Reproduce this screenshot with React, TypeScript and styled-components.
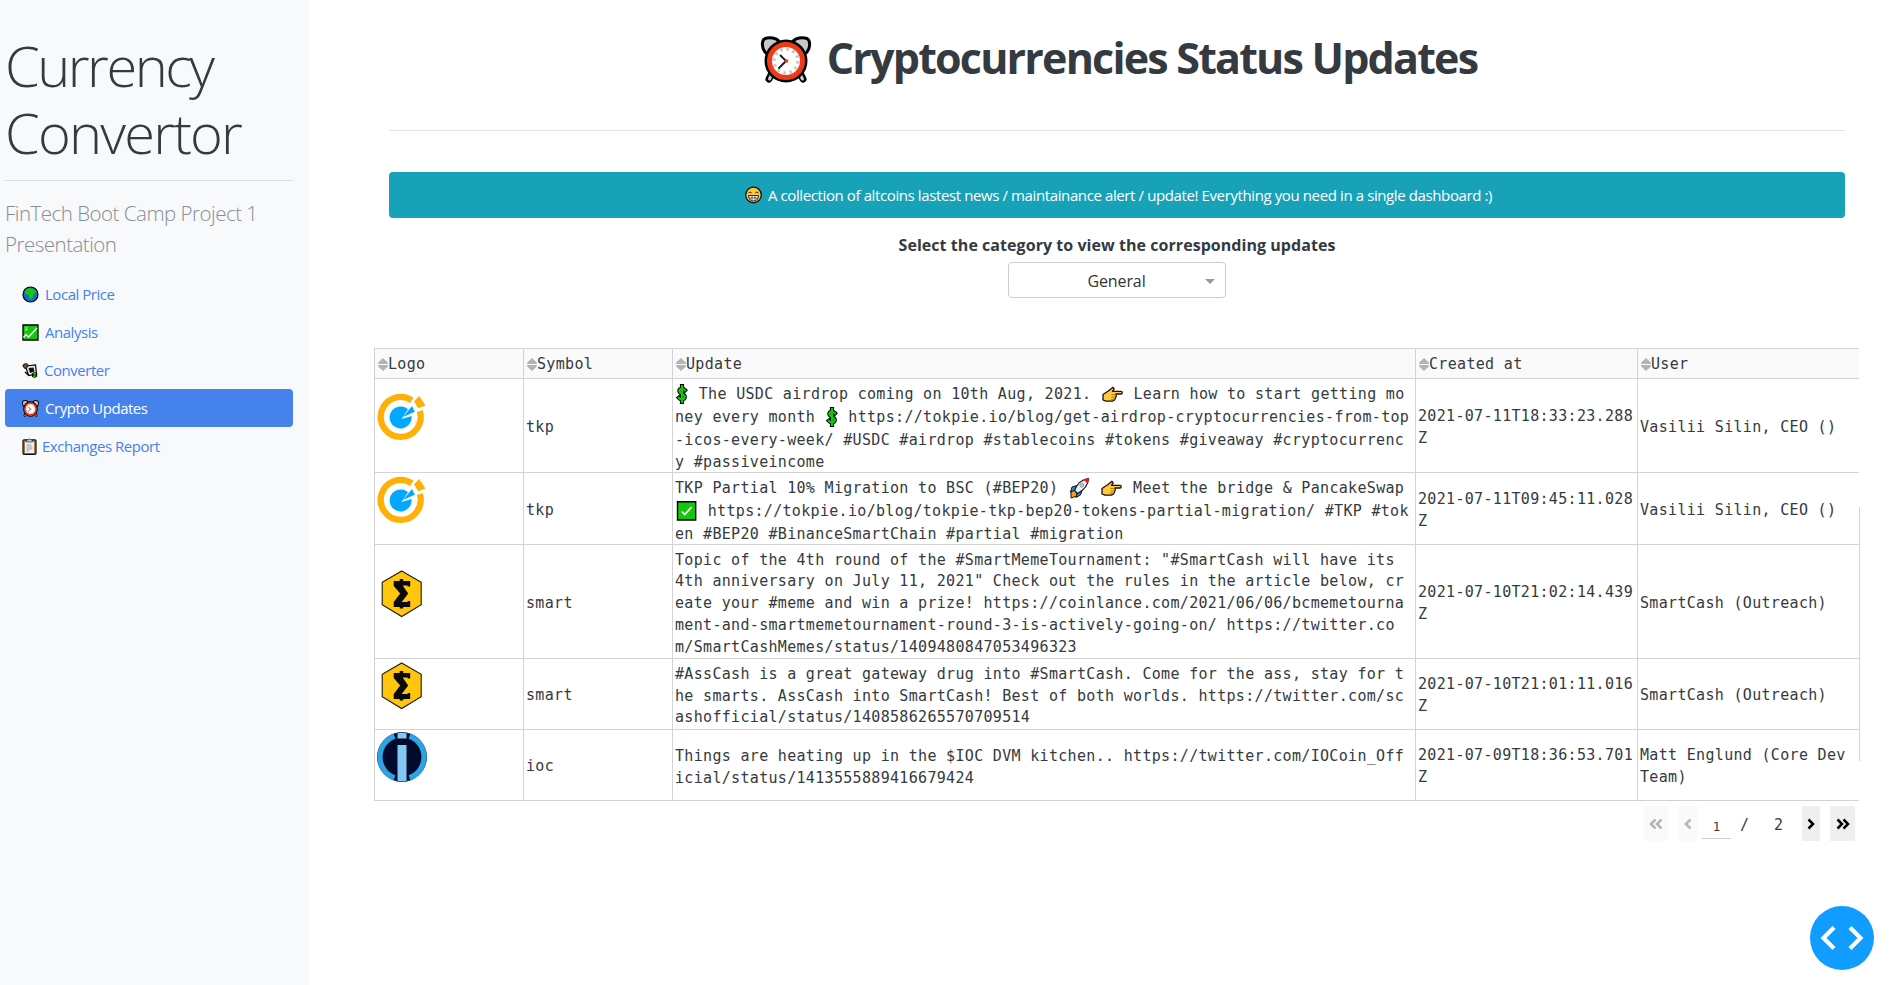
import React from 'react';
import styled, { createGlobalStyle, css } from 'styled-components';

const sans = `'Open Sans', 'Noto Sans', sans-serif`;
const mono = `'DejaVu Sans Mono', 'Liberation Mono', monospace`;
const line = '#d3d3d3';

const GlobalStyle = createGlobalStyle`
  *, *::before, *::after { box-sizing: border-box; }
  body {
    margin: 0;
    background: #fff;
    color: #343a40;
    font-family: ${sans};
    overflow: hidden;
  }
`;

/* ---------- page shell ---------- */

const Page = styled.div`
  display: flex;
  height: 985px;
`;

const Sidebar = styled.aside`
  flex: none;
  width: 309px;
  padding: 32px 16px 0 5px;
  background: #f8f9fb;
`;

const Brand = styled.h1`
  margin: 0;
  padding-bottom: 14px;
  border-bottom: 1px solid #dddfe2;
  font-size: 56px;
  line-height: 67px;
  font-weight: 300;
`;

const BrandLine = styled.span<{ $tracking: number }>`
  display: block;
  letter-spacing: ${(p) => p.$tracking}px;
`;

const Lead = styled.p`
  margin: 17px 0 15px;
  font-size: 20.5px;
  line-height: 31px;
  font-weight: 300;
  letter-spacing: -0.5px;
  color: #868e96;
  white-space: nowrap;
`;

const Nav = styled.nav`
  display: flex;
  flex-direction: column;
`;

const NavItem = styled.a<{ $active?: boolean; $gap?: number }>`
  display: flex;
  align-items: center;
  gap: ${(p) => p.$gap ?? 5}px;
  height: 38px;
  padding: 0 17px;
  border-radius: 4px;
  font-size: 15px;
  letter-spacing: -0.47px;
  color: #4582ec;
  ${(p) =>
    p.$active &&
    css`
      background: #4582ec;
      color: #fff;
    `}
`;

const Main = styled.main`
  flex: 1;
  min-width: 0;
  padding: 0 32px 0 65px;
`;

const Intro = styled.section`
  display: flex;
  flex-direction: column;
  align-items: center;
  margin: 0 14px 0 15px;
`;

const Title = styled.h2`
  display: flex;
  align-items: center;
  justify-content: center;
  gap: 16px;
  width: 100%;
  height: 131px;
  margin: 0;
  padding: 0 0 15px 4px;
  border-bottom: 1px solid #e2e3e4;
  font-size: 43px;
  font-weight: 700;
  letter-spacing: -1.8px;
  white-space: nowrap;
`;

const TitleIcon = styled.span`
  padding-top: 3px;
`;

const Notice = styled.div`
  display: flex;
  align-items: center;
  justify-content: center;
  gap: 6px;
  width: 100%;
  height: 46px;
  margin-top: 41px;
  padding-left: 3px;
  border-radius: 4px;
  background: #17a2b8;
  color: #fff;
  font-size: 15px;
  letter-spacing: -0.39px;
`;

const FieldLabel = styled.label`
  margin-top: 14px;
  font-size: 16px;
  line-height: 26px;
  font-weight: 700;
  letter-spacing: 0.05px;
`;

const Select = styled.div`
  display: flex;
  align-items: center;
  width: 218px;
  height: 36px;
  margin: 4px 0 50px;
  border: 1px solid #ccc;
  border-radius: 4px;
  font-size: 16px;
  letter-spacing: -0.1px;
  color: #333;
`;

const SelectValue = styled.span`
  flex: 1;
  padding: 1px 0 0 25px;
  text-align: center;
`;

const Caret = styled.span`
  margin: 2px 10px 0 6px;
  border: 5px solid transparent;
  border-bottom-width: 0;
  border-top-color: #999;
`;

/* ---------- table ---------- */

const Table = styled.div`
  position: relative;
  border-top: 1px solid ${line};
  font-family: ${mono};
  font-size: 15px;
  letter-spacing: 0.317px;
  line-height: 21.8px;
  white-space: pre;
`;

const ScrollEdge = styled.div`
  position: absolute;
  top: 158px;
  right: -1px;
  width: 1px;
  height: 254px;
  background: ${line};
`;

const Row = styled.div<{ $height: number; $head?: boolean }>`
  display: grid;
  grid-template-columns: 149px 149px 743px 222px 222px;
  grid-template-rows: 100%;
  height: ${(p) => p.$height}px;
  border-bottom: 1px solid ${line};
  background: ${(p) => (p.$head ? '#fafafa' : '#fff')};
`;

const Cell = styled.div<{ $drop?: number }>`
  display: flex;
  flex-direction: column;
  justify-content: center;
  padding: ${(p) => p.$drop ?? 4}px 0 0 2px;
  border-left: 1px solid ${line};
`;

const LogoCell = styled(Cell)`
  padding: 0 0 16px 2px;
`;

const HeadCell = styled(Cell)`
  flex-direction: row;
  justify-content: flex-start;
  align-items: center;
  padding: 2px 0 0 3px;
`;

const TextLine = styled.div<{ $tall?: boolean }>`
  flex: none;
  height: ${(p) => (p.$tall ? 22.8 : 21.8)}px;
`;

const Glyph = styled.svg`
  flex: none;
  display: block;
  overflow: visible;
`;

const InlineGlyph = styled.svg`
  display: inline-block;
  vertical-align: -5px;
  overflow: visible;
`;

const Pager = styled.div`
  display: flex;
  align-items: center;
  justify-content: flex-end;
  margin-top: 5px;
  padding-right: 4px;
  height: 35px;
  font-family: ${mono};
  font-size: 15px;
`;

const PageButton = styled.button<{ $width: number; $gap: number }>`
  display: flex;
  align-items: center;
  justify-content: center;
  width: ${(p) => p.$width}px;
  height: 35px;
  margin: 0 ${(p) => p.$gap}px 0 0;
  padding: 0;
  border: 0;
  background: #efefef;
  color: #000;
  &:disabled {
    background: #fafafa;
    color: #b5b5b5;
  }
`;

const PageCurrent = styled.span`
  width: 29px;
  height: 25px;
  margin-top: 6px;
  border-bottom: 1px solid #ccc;
  font-size: 12.5px;
  line-height: 25px;
  text-align: center;
`;

const PageTotal = styled.span`
  display: flex;
  justify-content: space-between;
  width: 43px;
  margin: 3px 19px 0 9px;
`;

const DevToggle = styled.button`
  position: fixed;
  right: 17px;
  bottom: 15px;
  display: flex;
  align-items: center;
  justify-content: center;
  width: 64px;
  height: 64px;
  padding: 0;
  border: 0;
  border-radius: 50%;
  background: #119dff;
`;

/* ---------- pictograms ---------- */

const AlarmClock = ({ size, height }: { size: number; height?: number }) => (
  <Glyph width={size} height={height ?? size} viewBox="0 0 50 47" preserveAspectRatio="none">
    <path d="M12 35 8 43M38 35l4 8" stroke="#000" strokeWidth="7" strokeLinecap="round" />
    <path d="M11 38 8.500 43M39 38l2.500 5" stroke="#ccc" strokeWidth="3" strokeLinecap="round" />
    <path d="M4 16C0 11 1 4 4 2.500 9 1 15 2 18 5L7 19ZM46 16c4-5 3-12 0-13.500C41 1 35 2 32 5l11 14Z" fill="#c8c8c8" stroke="#000" strokeWidth="3" strokeLinejoin="round" />
    <circle cx="25" cy="25" r="21.500" fill="#000" />
    <circle cx="25" cy="25" r="16.500" fill="#fff" stroke="#f03a17" strokeWidth="5" />
    <circle cx="25" cy="25" r="12" fill="none" stroke="#c8c8c8" strokeWidth="3.500" strokeDasharray="2.600 3.683" />
    <path d="m19.500 19.500 5.500 5.500-7 7" fill="none" stroke="#222" strokeWidth="2" strokeLinecap="round" />
    <circle cx="25.500" cy="25" r="1.800" fill="#f03a17" />
  </Glyph>
);

const Globe = () => (
  <Glyph width="17" height="17" viewBox="0 0 17 17">
    <circle cx="8.500" cy="8.500" r="7.500" fill="#0b70d0" stroke="#000" strokeWidth="1.200" />
    <path d="M4 3.500 7.500 2l4 1 2.500 2-1 2.500-1.500.5-.5 3-2 2.500-1.500-1L7 9 4 8.500 3 6Z" fill="#16c60c" />
  </Glyph>
);

const ChartUp = () => (
  <Glyph width="17" height="17" viewBox="0 0 17 17">
    <path d="M1 1h15v15H1z" fill="#16c60c" stroke="#000" strokeWidth="1.300" />
    <path d="m1.500 13.500 2.500-3 2.500 2.500L15 4" fill="none" stroke="#fff" strokeWidth="1.400" />
    <path d="m3 2.500 1.300 2 1.300-2M4.300 4.500V7M3 5.500h2.600" fill="none" stroke="#b6f3b2" strokeWidth=".7" />
  </Glyph>
);

const FlyingMoney = () => (
  <Glyph width="16" height="17" viewBox="0 0 16 17">
    <path d="m3.500 4 10-1 1 9-8 1.500Z" fill="#e8e8e8" stroke="#000" strokeWidth="1.200" />
    <path d="m6.500 6 5-.5 1 4-4.500 1.500Z" fill="#111" />
    <path d="M1 3c2-2 5-1.500 5.500.5L4 6.500C2 6.500 1 5 1 3Z" fill="#6b4b35" stroke="#000" strokeWidth=".9" />
    <path d="m3 10 4 3.500" stroke="#000" strokeWidth="1.500" />
    <circle cx="12.500" cy="13" r="2.800" fill="#0a0a0a" />
    <path d="M14 11.500c-2-1-3 .8-1.500 1.400 1.600.6.700 2.300-1.200 1.400" fill="none" stroke="#16c60c" strokeWidth="1.200" />
  </Glyph>
);

const Clipboard = () => (
  <Glyph width="15" height="17" viewBox="0 0 15 17">
    <rect x="1" y="1.800" width="13" height="14.500" rx="1" fill="#a8794f" stroke="#111" strokeWidth="1.200" />
    <path d="M3 4h9v11H3z" fill="#f2f2f2" />
    <path d="M4.500 4V2h1.700L7.500.6 8.800 2h1.700v2Z" fill="#ccc" stroke="#444" strokeWidth=".8" />
    <path d="M4.500 7h5M4.500 9h6M4.500 11h6M4.500 13H7" stroke="#9a9a9a" strokeWidth="1" />
  </Glyph>
);

const GrinFace = () => (
  <Glyph width="17" height="18" viewBox="0 0 17 18">
    <circle cx="8.500" cy="9" r="7.800" fill="#ffc83d" stroke="#111" strokeWidth="1.300" />
    <path d="M3.500 7q1.600-2 3.200 0M10.300 7q1.600-2 3.200 0" fill="none" stroke="#222" strokeWidth="1" />
    <path d="M3.500 9.500h10c0 3.500-2 5.500-5 5.500s-5-2-5-5.500Z" fill="#fff" stroke="#111" strokeWidth=".9" />
    <path d="M4 12h9M7 9.500V15M10 9.500V15" stroke="#222" strokeWidth=".7" />
  </Glyph>
);

const Dollar = () => (
  <InlineGlyph width="14.400" height="20" viewBox="0 0 14.400 20">
    <g fill="none" strokeLinecap="square">
      <path d="M10 6.200C8 4 4.200 4.400 4.400 7.200c.2 2.800 5.400 2.600 5.400 5.600 0 3-4.300 3.200-6 1M7 2v16" stroke="#000" strokeWidth="4.200" />
      <path d="M10 6.200C8 4 4.200 4.400 4.400 7.200c.2 2.800 5.400 2.600 5.400 5.600 0 3-4.300 3.200-6 1M7 2v16" stroke="#16c60c" strokeWidth="2.200" />
    </g>
  </InlineGlyph>
);

const PointRight = () => (
  <InlineGlyph width="23.400" height="20" viewBox="0 0 23.400 20">
    <path d="M2 10.500 8 6.500l4-3.200 1.200 1.500-1.700 2.500h8.500c1.700 0 1.700 2.700 0 2.700h-5l.3 2-.8 2-1 2-2 1.200H5L2 16Z" fill="#ffc83d" stroke="#1a1208" strokeWidth="1.300" strokeLinejoin="round" />
    <path d="M10.500 10.500h4M10.500 13h4M10 15.300h3.500" stroke="#a06a10" strokeWidth=".8" />
  </InlineGlyph>
);

const Rocket = () => (
  <InlineGlyph width="23.400" height="20" viewBox="0 0 23.400 20">
    <path d="m3 13 4-1 3 3-1 3-6 2Z" fill="#ff9a1f" stroke="#1a1208" />
    <path d="M9 7.500 4 9l-1.500 5 4-1.500ZM14 12.500 12.500 17 8 19.500l1-4.500Z" fill="#1c8fe0" stroke="#111" />
    <path d="M6.500 12.500C9 6 13 1.500 20.500.500 20 8 15.500 12.500 9.500 15.500Z" fill="#eef1f4" stroke="#111" strokeWidth="1.200" />
    <path d="M16 1.700 20.500.500 19.600 5Z" fill="#e81224" stroke="#e81224" />
    <circle cx="13.800" cy="7.200" r="1.900" fill="#bcd" stroke="#777" strokeWidth=".7" />
  </InlineGlyph>
);

const CheckBox = () => (
  <InlineGlyph width="23.400" height="20" viewBox="0 0 23.400 20">
    <path d="M2.500.800h18.200V19H2.500z" fill="#16c60c" stroke="#000" strokeWidth="1.400" />
    <path d="m6.800 10.500 3 3 6.700-7.500" fill="none" stroke="#fff" strokeWidth="1.700" />
  </InlineGlyph>
);

const SortIcon = () => (
  <Glyph width="10" height="14" viewBox="0 0 10 14">
    <path d="M5 0 9.800 4.500V6H.2V4.500ZM5 13 9.800 8.500V7H.2v1.500Z" fill="#b3b3b3" />
  </Glyph>
);

const TokpieLogo = () => (
  <Glyph width="50" height="50" viewBox="0 0 50 50">
    <path d="M34.800 7.300A20 20 0 1 0 42.800 18" fill="none" stroke="#ffb007" strokeWidth="6.300" />
    <path d="M42.200 3 48.500 12.500 41 15.300 37 8.300Z" fill="#ffb007" />
    <path d="M31 16.300A11 11 0 1 0 34.500 23L24.500 26Z" fill="#00a8ff" />
    <path d="m35 13 2.800 5.800-11.800 5.200Z" fill="#00a8ff" />
  </Glyph>
);

const SmartCashLogo = () => (
  <Glyph width="50" height="50" viewBox="0.8 0 50 50">
    <path d="M25.500 2 45 13.300v22.500L25.500 47.500 6 35.800V13.300Z" fill="#ffc60b" stroke="#1b1a16" strokeWidth="1.100" />
    <path d="M17.500 12h6v-2h3.500v2H34v5.500h-2l-1-1h-4.500L32 24.500 25.500 33H31l1-1h2v6h-7v1.500h-3.500V38h-6v-5L24 24.500 17.500 17Z" fill="#0b0b0b" />
  </Glyph>
);

const IoCoinLogo = () => (
  <Glyph width="50" height="50" viewBox="0 0 50 50">
    <circle cx="25" cy="25" r="24.500" fill="#020b2e" stroke="#123a60" />
    <path d="M17.500 4.300A22 22 0 0 0 17.500 45.700M32.500 4.300A22 22 0 0 1 32.500 45.700" fill="none" stroke="#2ea3e3" strokeWidth="5.300" />
    <path d="M20.500 1.300q4.500-1 9 0V6.500h-9ZM20.500 13h9v35.700q-4.500 1-9 0Z" fill="#82c8f2" />
  </Glyph>
);

const Chevrons = ({ double, left }: { double?: boolean; left?: boolean }) => (
  <Glyph width={double ? 14 : 8} height="12" viewBox={double ? '0 0 14 12' : '0 0 8 12'}>
    <g fill="none" stroke="currentColor" strokeWidth="2.500" transform={left ? `translate(${double ? 14 : 8} 0) scale(-1 1)` : undefined}>
      <path d="m1.500 1.500 4.500 4.500-4.500 4.500" />
      {double && <path d="M7.500 1.500 12 6l-4.500 4.500" />}
    </g>
  </Glyph>
);

/* ---------- data ---------- */

type Update = {
  height: number;
  logo: React.ReactNode;
  symbol: string;
  lines: { text: React.ReactNode; tall?: boolean }[];
  drop: number;
  created: string;
  user: string[];
};

const updates: Update[] = [
  {
    height: 94,
    logo: <TokpieLogo />,
    symbol: 'tkp',
    drop: 7,
    lines: [
      { tall: true, text: <><Dollar /> The USDC airdrop coming on 10th Aug, 2021. <PointRight /> Learn how to start getting mo</> },
      { tall: true, text: <>ney every month <Dollar /> https://tokpie.io/blog/get-airdrop-cryptocurrencies-from-top</> },
      { text: '-icos-every-week/ #USDC #airdrop #stablecoins #tokens #giveaway #cryptocurrenc' },
      { text: 'y #passiveincome' },
    ],
    created: '2021-07-11T18:33:23.288',
    user: ['Vasilii Silin, CEO ()'],
  },
  {
    height: 72,
    logo: <TokpieLogo />,
    symbol: 'tkp',
    drop: 7,
    lines: [
      { tall: true, text: <>TKP Partial 10% Migration to BSC (#BEP20) <Rocket /> <PointRight /> Meet the bridge &amp; PancakeSwap</> },
      { tall: true, text: <><CheckBox /> https://tokpie.io/blog/tokpie-tkp-bep20-tokens-partial-migration/ #TKP #tok</> },
      { text: 'en #BEP20 #BinanceSmartChain #partial #migration' },
    ],
    created: '2021-07-11T09:45:11.028',
    user: ['Vasilii Silin, CEO ()'],
  },
  {
    height: 114,
    logo: <SmartCashLogo />,
    symbol: 'smart',
    drop: 5,
    lines: [
      { text: 'Topic of the 4th round of the #SmartMemeTournament: "#SmartCash will have its' },
      { text: '4th anniversary on July 11, 2021" Check out the rules in the article below, cr' },
      { text: 'eate your #meme and win a prize! https://coinlance.com/2021/06/06/bcmemetourna' },
      { text: 'ment-and-smartmemetournament-round-3-is-actively-going-on/ https://twitter.co' },
      { text: 'm/SmartCashMemes/status/1409480847053496323' },
    ],
    created: '2021-07-10T21:02:14.439',
    user: ['SmartCash (Outreach)'],
  },
  {
    height: 71,
    logo: <SmartCashLogo />,
    symbol: 'smart',
    drop: 5,
    lines: [
      { text: '#AssCash is a great gateway drug into #SmartCash. Come for the ass, stay for t' },
      { text: 'he smarts. AssCash into SmartCash! Best of both worlds. https://twitter.com/sc' },
      { text: 'ashofficial/status/1408586265570709514' },
    ],
    created: '2021-07-10T21:01:11.016',
    user: ['SmartCash (Outreach)'],
  },
  {
    height: 71,
    logo: <IoCoinLogo />,
    symbol: 'ioc',
    drop: 5,
    lines: [
      { text: 'Things are heating up in the $IOC DVM kitchen.. https://twitter.com/IOCoin_Off' },
      { text: 'icial/status/1413555889416679424' },
    ],
    created: '2021-07-09T18:36:53.701',
    user: ['Matt Englund (Core Dev', 'Team)'],
  },
];

const columns = ['Logo', 'Symbol', 'Update', 'Created at', 'User'];

export default function App() {
  return (
    <>
      <GlobalStyle />
      <Page>
        <Sidebar>
          <Brand>
            <BrandLine $tracking={-2.5}>Currency</BrandLine>
            <BrandLine $tracking={-1.8}>Convertor</BrandLine>
          </Brand>
          <Lead>FinTech Boot Camp Project 1<br />Presentation</Lead>
          <Nav>
            <NavItem $gap={6}><Globe />Local Price</NavItem>
            <NavItem $gap={6}><ChartUp />Analysis</NavItem>
            <NavItem $gap={6}><FlyingMoney />Converter</NavItem>
            <NavItem $active $gap={6}><AlarmClock size={17} />Crypto Updates</NavItem>
            <NavItem><Clipboard />Exchanges Report</NavItem>
          </Nav>
        </Sidebar>
        <Main>
          <Intro>
            <Title>
              <TitleIcon><AlarmClock size={50} height={47} /></TitleIcon>
              Cryptocurrencies Status Updates
            </Title>
            <Notice>
              <GrinFace />
              A collection of altcoins lastest news / maintainance alert / update! Everything you need in a single dashboard :)
            </Notice>
            <FieldLabel>Select the category to view the corresponding updates</FieldLabel>
            <Select><SelectValue>General</SelectValue><Caret /></Select>
          </Intro>
          <Table>
            <Row $height={30} $head>
              {columns.map((name) => (
                <HeadCell key={name}><SortIcon />{name}</HeadCell>
              ))}
            </Row>
            {updates.map((u) => (
              <Row key={u.created} $height={u.height}>
                <LogoCell>{u.logo}</LogoCell>
                <Cell>{u.symbol}</Cell>
                <Cell $drop={u.drop}>
                  {u.lines.map((l, i) => (
                    <TextLine key={i} $tall={l.tall}>{l.text}</TextLine>
                  ))}
                </Cell>
                <Cell>
                  <TextLine>{u.created}</TextLine>
                  <TextLine>Z</TextLine>
                </Cell>
                <Cell>
                  {u.user.map((t) => (
                    <TextLine key={t}>{t}</TextLine>
                  ))}
                </Cell>
              </Row>
            ))}
            <ScrollEdge />
          </Table>
          <Pager>
            <PageButton $width={24} $gap={10} disabled><Chevrons double left /></PageButton>
            <PageButton $width={19} $gap={5} disabled><Chevrons left /></PageButton>
            <PageCurrent>1</PageCurrent>
            <PageTotal><span>/</span><span>2</span></PageTotal>
            <PageButton $width={18} $gap={10}><Chevrons /></PageButton>
            <PageButton $width={25} $gap={0}><Chevrons double /></PageButton>
          </Pager>
        </Main>
      </Page>
      <DevToggle>
        <Glyph width="42" height="24" viewBox="0 0 42 24">
          <path d="M13 1.500 2.500 12 13 22.500M29 1.500 39.500 12 29 22.500" fill="none" stroke="#fff" strokeWidth="4.200" />
        </Glyph>
      </DevToggle>
    </>
  );
}
